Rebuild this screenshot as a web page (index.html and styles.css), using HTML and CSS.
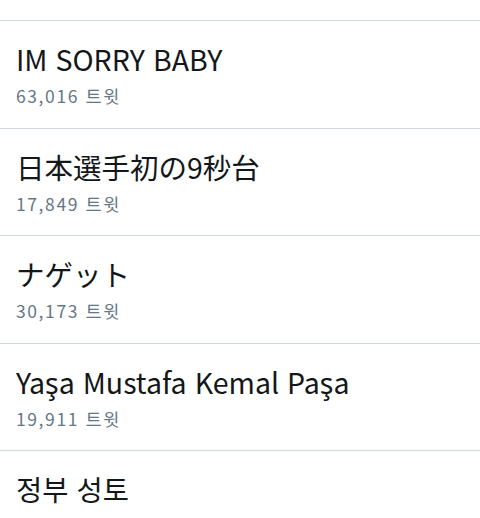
FILE: index.html
```html
<!DOCTYPE html>
<html lang="ko">
<head>
<meta charset="utf-8">
<link rel="stylesheet" href="styles.css">
</head>
<body>
<div class="list">
  <div class="prev"></div>
  <div class="trend">
    <div class="title">IM SORRY BABY</div>
    <div class="count">63,016 트윗</div>
  </div>
  <div class="trend">
    <div class="title" lang="ja">日本選手初の9秒台</div>
    <div class="count">17,849 트윗</div>
  </div>
  <div class="trend">
    <div class="title" lang="ja">ナゲット</div>
    <div class="count">30,173 트윗</div>
  </div>
  <div class="trend">
    <div class="title">Yaşa Mustafa Kemal Paşa</div>
    <div class="count">19,911 트윗</div>
  </div>
  <div class="trend">
    <div class="title">정부 성토</div>
  </div>
</div>
</body>
</html>
```

FILE: styles.css
```css
html, body {
  margin: 0;
  padding: 0;
  background: #ffffff;
}
body {
  font-family: "Noto Sans CJK KR", "Noto Sans CJK JP", "Noto Sans", sans-serif;
  overflow: hidden;
  width: 480px;
  height: 518px;
}
.list {
  display: flex;
  flex-direction: column;
}
.prev {
  height: 20px;
  border-bottom: 1px solid #d0d7dc;
}
.trend {
  height: 106.5px;
  box-sizing: content-box;
  border-bottom: 1px solid #d0d7dc;
  padding: 0 16px;
  display: flex;
  flex-direction: column;
}
.title {
  margin-top: 20px;
  font-size: 28.5px;
  line-height: 36px;
  color: #14171a;
  white-space: nowrap;
}
.title:lang(ja) {
  font-family: "Noto Sans CJK JP", "Noto Sans CJK KR", sans-serif;
}
.count {
  margin-top: 8px;
  font-size: 17.5px;
  letter-spacing: 1.6px;
  line-height: 22px;
  color: #657786;
}
```
